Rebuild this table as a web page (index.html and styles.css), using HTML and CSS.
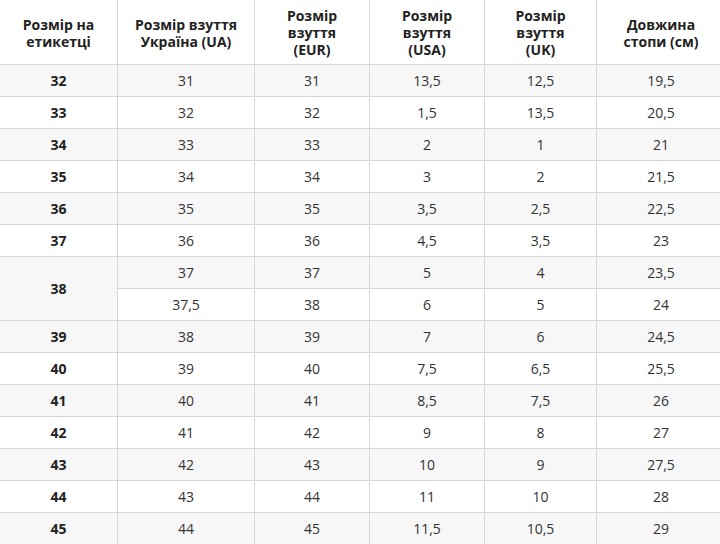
FILE: index.html
```html
<!DOCTYPE html>
<html lang="uk">
<head>
<meta charset="utf-8">
<link rel="stylesheet" href="styles.css">
</head>
<body>
<table class="sizes">
  <colgroup>
    <col class="c1"><col class="c2"><col class="c3"><col class="c4"><col class="c5"><col class="c6">
  </colgroup>
  <thead>
    <tr>
      <th>Розмір на<br>етикетці</th>
      <th>Розмір взуття<br>Україна (UA)</th>
      <th>Розмір<br>взуття<br>(EUR)</th>
      <th>Розмір<br>взуття<br>(USA)</th>
      <th>Розмір<br>взуття<br>(UK)</th>
      <th>Довжина<br>стопи (см)</th>
    </tr>
  </thead>
  <tbody>
    <tr><td class="lbl">32</td><td>31</td><td>31</td><td>13,5</td><td>12,5</td><td>19,5</td></tr>
    <tr><td class="lbl">33</td><td>32</td><td>32</td><td>1,5</td><td>13,5</td><td>20,5</td></tr>
    <tr><td class="lbl">34</td><td>33</td><td>33</td><td>2</td><td>1</td><td>21</td></tr>
    <tr><td class="lbl">35</td><td>34</td><td>34</td><td>3</td><td>2</td><td>21,5</td></tr>
    <tr><td class="lbl">36</td><td>35</td><td>35</td><td>3,5</td><td>2,5</td><td>22,5</td></tr>
    <tr><td class="lbl">37</td><td>36</td><td>36</td><td>4,5</td><td>3,5</td><td>23</td></tr>
    <tr><td class="lbl" rowspan="2">38</td><td>37</td><td>37</td><td>5</td><td>4</td><td>23,5</td></tr>
    <tr><td>37,5</td><td>38</td><td>6</td><td>5</td><td>24</td></tr>
    <tr><td class="lbl">39</td><td>38</td><td>39</td><td>7</td><td>6</td><td>24,5</td></tr>
    <tr><td class="lbl">40</td><td>39</td><td>40</td><td>7,5</td><td>6,5</td><td>25,5</td></tr>
    <tr><td class="lbl">41</td><td>40</td><td>41</td><td>8,5</td><td>7,5</td><td>26</td></tr>
    <tr><td class="lbl">42</td><td>41</td><td>42</td><td>9</td><td>8</td><td>27</td></tr>
    <tr><td class="lbl">43</td><td>42</td><td>43</td><td>10</td><td>9</td><td>27,5</td></tr>
    <tr><td class="lbl">44</td><td>43</td><td>44</td><td>11</td><td>10</td><td>28</td></tr>
    <tr><td class="lbl">45</td><td>44</td><td>45</td><td>11,5</td><td>10,5</td><td>29</td></tr>
  </tbody>
</table>
</body>
</html>
```
FILE: styles.css
```css
html, body {
  margin: 0;
  padding: 0;
  background: #fff;
  overflow: hidden;
}
body {
  font-family: "Open Sans", "Noto Sans", sans-serif;
  font-size: 14px;
  color: #333;
}
.sizes {
  border-collapse: collapse;
  table-layout: fixed;
  width: 726px;
  margin: 0 0 0 -1px;
}
.c1 { width: 118px; }
.c2 { width: 137px; }
.c3 { width: 115px; }
.c4 { width: 115px; }
.c5 { width: 112px; }
.c6 { width: 129px; }
.sizes th,
.sizes td {
  border: 1px solid #d6d6d6;
  padding: 0;
  text-align: center;
  vertical-align: middle;
}
.sizes thead th {
  border-top-color: #fff;
}
.sizes th {
  height: 63px;
  font-weight: 700;
  line-height: 17px;
  color: #222;
  background: #fff;
}
.sizes td {
  height: 31px;
  line-height: 17px;
}
.sizes td.lbl {
  font-weight: 700;
  color: #222;
}
.sizes tbody tr:nth-child(odd) td {
  background: #f7f7f7;
}
.sizes tbody tr:nth-child(even) td {
  background: #fff;
}
```
